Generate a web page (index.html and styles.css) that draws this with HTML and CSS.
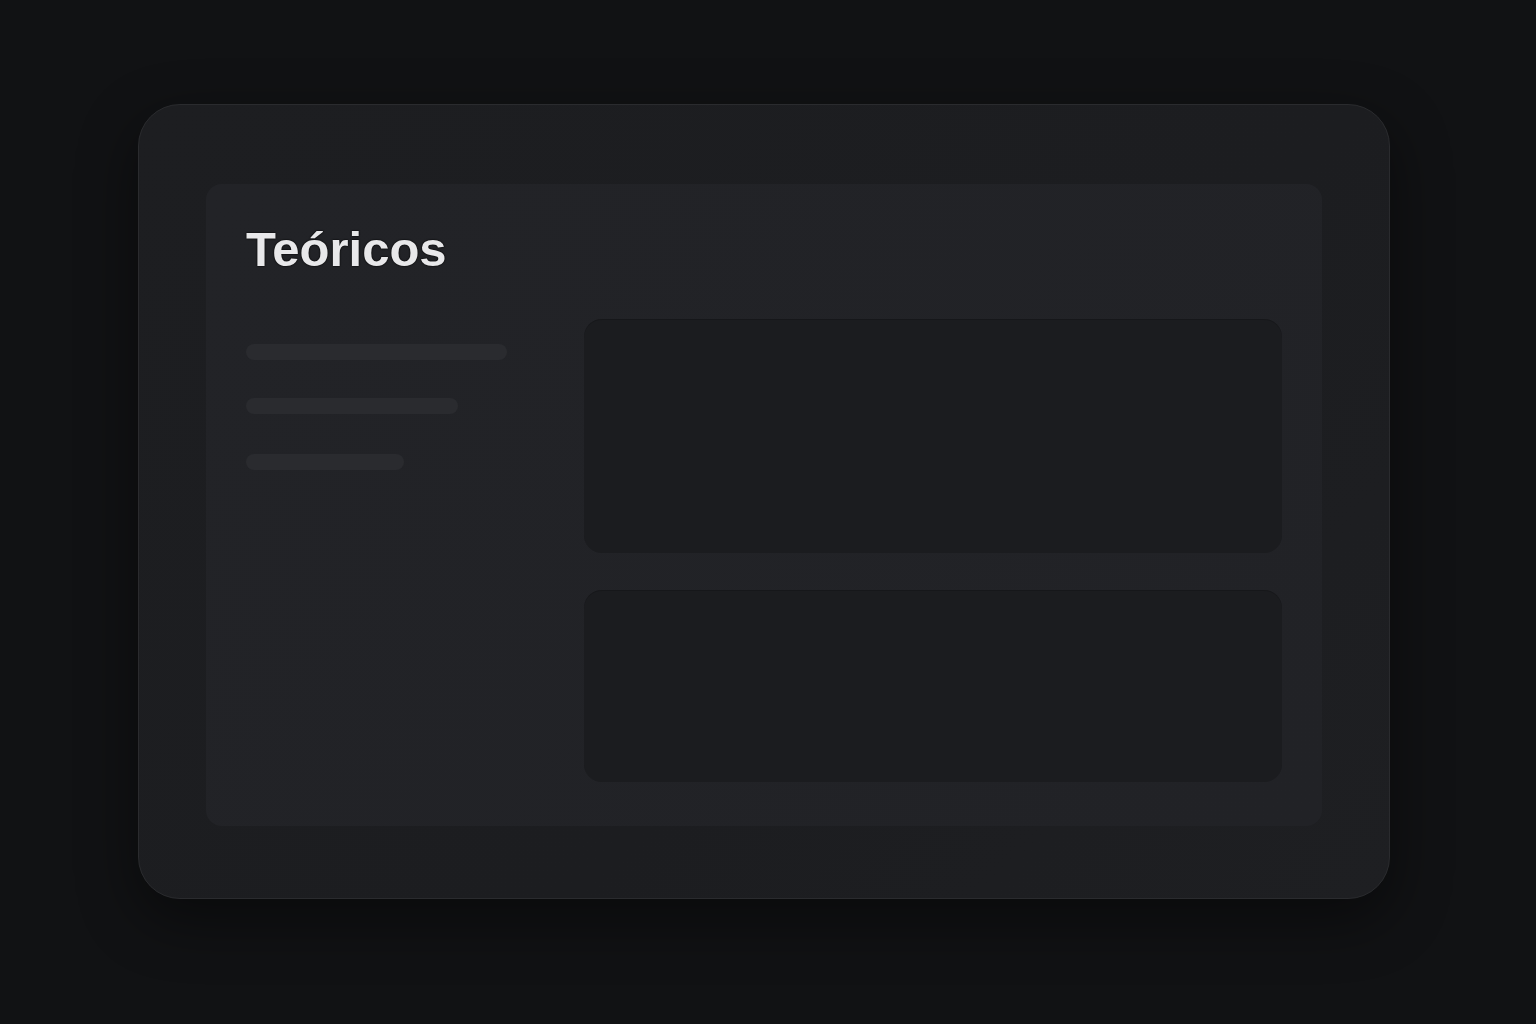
FILE: index.html
```html
<!DOCTYPE html>
<html lang="es">
<head>
<meta charset="utf-8">
<title>Teóricos</title>
<link rel="stylesheet" href="styles.css">
</head>
<body>
<div class="frame">
  <section class="panel">
    <h1 class="title">Teóricos</h1>
    <div class="layout">
      <div class="side">
        <div class="bar bar-1"></div>
        <div class="bar bar-2"></div>
        <div class="bar bar-3"></div>
      </div>
      <div class="main">
        <div class="card card-1"></div>
        <div class="card card-2"></div>
      </div>
    </div>
  </section>
</div>
</body>
</html>
```
FILE: styles.css
```css
html, body {
  margin: 0;
  padding: 0;
}
body {
  width: 1536px;
  height: 1024px;
  background: #111214;
  font-family: "Liberation Sans", Arial, sans-serif;
  box-sizing: border-box;
  padding: 104px 0 0 138px;
  overflow: hidden;
}
.frame {
  width: 1252px;
  height: 795px;
  box-sizing: border-box;
  padding: 79px 67px 72px 67px;
  border: 1px solid #2a2b2e;
  border-radius: 42px;
  background: linear-gradient(135deg, #1d1e21 0%, #1c1d20 60%, #1e1f22 100%);
  box-shadow: 0 20px 60px rgba(0, 0, 0, 0.45);
}
.panel {
  height: 100%;
  box-sizing: border-box;
  padding: 41px 40px 44px 40px;
  border-radius: 16px;
  background: linear-gradient(135deg, #222327 0%, #212226 100%);
  display: flex;
  flex-direction: column;
}
.title {
  margin: 0 0 46px 0;
  font-size: 49px;
  line-height: 48px;
  font-weight: 700;
  color: #e8e8ea;
  letter-spacing: 0;
  text-shadow: 0 0 1px #000, 0 0 2px #000;
}
.layout {
  flex: 1;
  display: grid;
  grid-template-columns: 298px 1fr;
  column-gap: 40px;
}
.side {
  padding-top: 25px;
  display: flex;
  flex-direction: column;
}
.bar {
  height: 16px;
  border-radius: 8px;
  background: #2a2b2f;
}
.bar-1 { width: 261px; }
.bar-2 { width: 212px; margin-top: 38px; }
.bar-3 { width: 158px; margin-top: 40px; }
.main {
  display: flex;
  flex-direction: column;
  gap: 37px;
}
.card {
  border-radius: 18px;
  background: #1b1c1f;
  box-shadow: inset 0 1px 0 rgba(0, 0, 0, 0.15);
}
.card-1 { height: 234px; }
.card-2 { height: 192px; }
```
